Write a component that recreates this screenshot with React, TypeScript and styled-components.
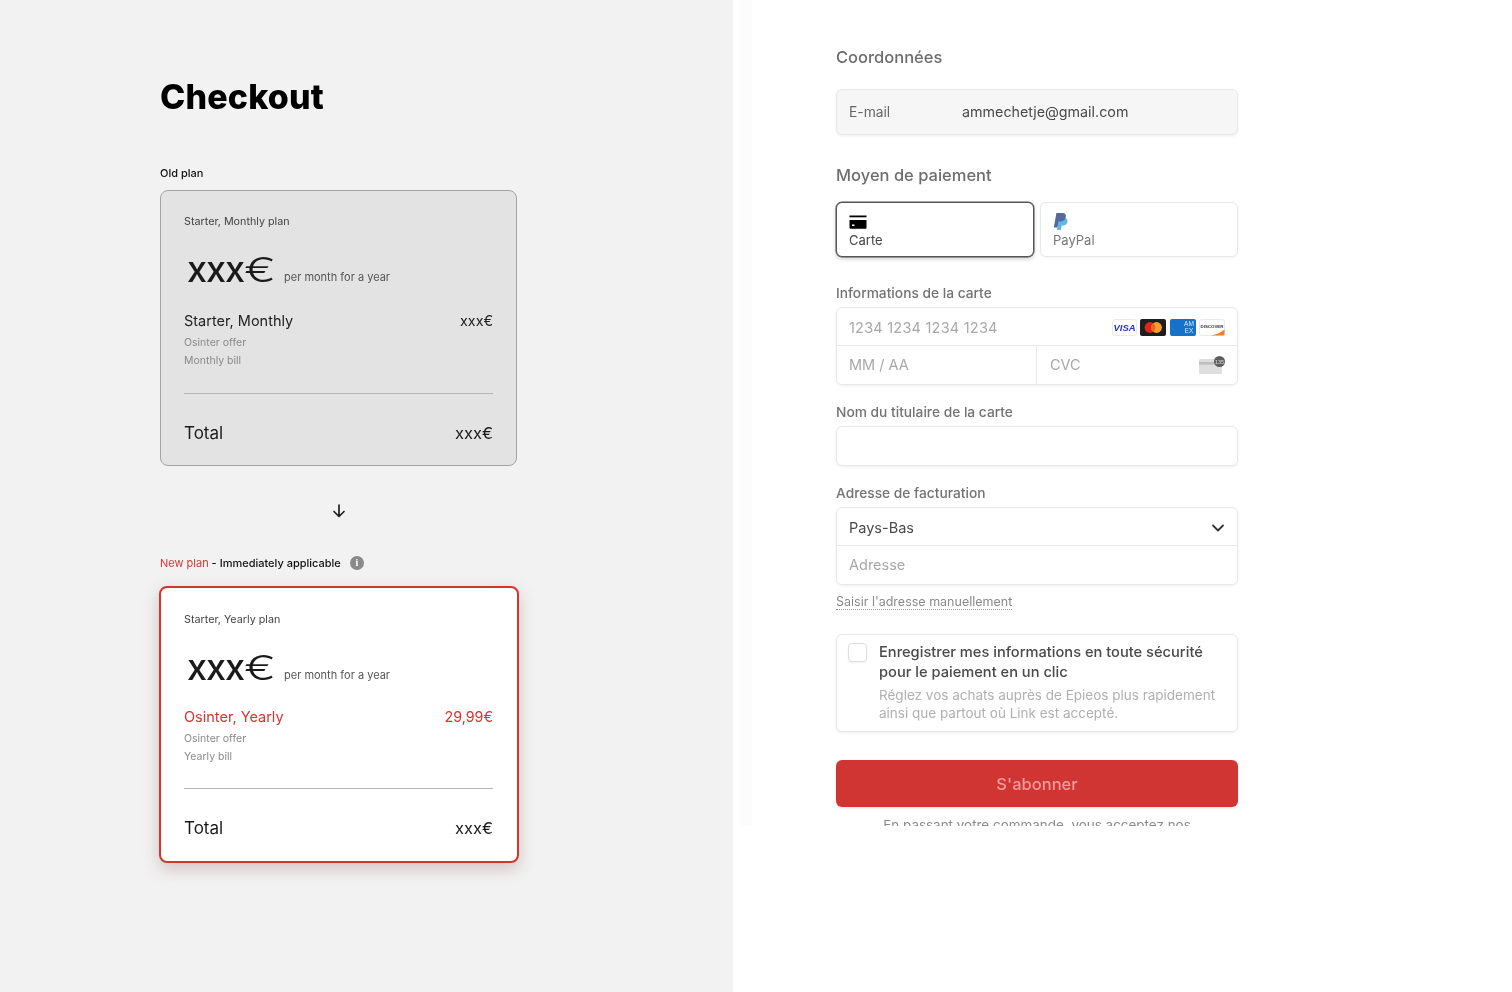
import React from "react";
import styled, { createGlobalStyle } from "styled-components";

const Global = createGlobalStyle`
  html, body { margin: 0; padding: 0; background: #fff; }
  * { box-sizing: border-box; }
  body { font-family: "Inter", "Liberation Sans", sans-serif; }
`;

const Page = styled.main`
  display: flex;
  width: 1512px;
  height: 992px;
  overflow: hidden;
  background: #fff;
`;

const LeftPanel = styled.section`
  width: 733px;
  height: 992px;
  flex: none;
  background: #f2f2f2;
  color: #111;
`;

const LeftColumn = styled.div`
  padding: 77px 0 0 160px;
  filter: blur(0.3px);
`;

const Title = styled.h1`
  margin: 0 0 48px;
  font-size: 34px;
  line-height: 40px;
  font-weight: 800;
  letter-spacing: 0.15px;
  color: #000;
`;

const PlanLabel = styled.div`
  display: flex;
  align-items: center;
  height: 16px;
  font-size: 11px;
  font-weight: 500;
  color: #111;
`;

const Accent = styled.span`
  color: #d43a35;
  font-weight: 400;
  white-space: pre;
`;

const InfoDot = styled.span`
  display: inline-flex;
  align-items: center;
  justify-content: center;
  width: 14px;
  height: 14px;
  margin-left: 9px;
  border-radius: 50%;
  background: #8a8a8a;
  color: #fff;
  font: 700 10px/14px "Liberation Serif", serif;
`;

const Card = styled.article<{ $active?: boolean }>`
  display: flex;
  flex-direction: column;
  margin-top: ${(p) => (p.$active ? 15 : 9)}px;
  margin-left: ${(p) => (p.$active ? -1 : 0)}px;
  width: ${(p) => (p.$active ? 360 : 357)}px;
  height: ${(p) => (p.$active ? 277 : 276)}px;
  padding: ${(p) => (p.$active ? "25px 24px 0 23px" : "24px 23px 0 23px")};
  border: ${(p) => (p.$active ? "2px solid #d5352f" : "1px solid #a4a4a4")};
  border-radius: 8px;
  background: ${(p) => (p.$active ? "#fff" : "#e3e3e3")};
  box-shadow: ${(p) => (p.$active ? "0 6px 16px rgba(120, 60, 55, 0.25)" : "none")};
`;

const PlanName = styled.div`
  height: 14px;
  font-size: 10.75px;
  line-height: 14px;
  color: #444;
`;

const PriceRow = styled.div`
  display: flex;
  align-items: flex-end;
  height: 44px;
  margin-top: 19px;
  padding-left: 3px;
`;

const BigPrice = styled.span`
  width: 97px;
  font-size: 36px;
  line-height: 44px;
  font-weight: 500;
  letter-spacing: -1px;
  color: #1a1a1a;
`;

const Euro = styled.span`
  display: inline-block;
  font-size: 34px;
  font-weight: 300;
  letter-spacing: 0;
  transform: scaleX(1.4);
  transform-origin: left center;
`;

const PerMonth = styled.span`
  margin-bottom: 8px;
  font-size: 11px;
  line-height: 14px;
  color: #555;
`;

const LineRow = styled.div<{ $active?: boolean }>`
  display: flex;
  justify-content: space-between;
  align-items: center;
  height: 20px;
  margin-top: ${(p) => (p.$active ? 17 : 19)}px;
  font-size: 14.5px;
  line-height: 20px;
  color: ${(p) => (p.$active ? "#d5352f" : "#222")};
`;

const Amount = styled.span`
  font-size: 14.3px;
`;

const Note = styled.div<{ $first?: boolean }>`
  height: 14px;
  margin-top: ${(p) => (p.$first ? 5 : 4)}px;
  font-size: 10.5px;
  line-height: 14px;
  color: #8a8a8a;
`;

const Rule = styled.hr<{ $active?: boolean }>`
  width: 100%;
  height: 1px;
  margin: ${(p) => (p.$active ? "24px" : "25px")} 0 0;
  border: 0;
  background: #b6b6b6;
`;

const TotalRow = styled.div`
  display: flex;
  justify-content: space-between;
  align-items: center;
  height: 24px;
  margin-top: 27px;
  font-size: 16.5px;
  line-height: 24px;
  color: #1a1a1a;
`;

const TotalLabel = styled.span`
  font-size: 17px;
`;

const ArrowSlot = styled.div`
  display: flex;
  justify-content: center;
  width: 357px;
  height: 16px;
  margin: 36px 0 37px;
  color: #222;
`;

const Stripe = styled.div`
  width: 19px;
  height: 826px;
  flex: none;
  background: linear-gradient(90deg, #fff 0, #fff 20%, #fcfcfc 50%, #fbfbfb 100%);
`;

const Form = styled.section`
  width: 410px;
  height: 826px;
  margin-left: 80px;
  flex: none;
  overflow: hidden;
  padding: 47px 4px 0;
  filter: blur(0.4px);
`;

const SectionTitle = styled.h2<{ $gap?: number }>`
  margin: ${(p) => p.$gap ?? 0}px 0 0;
  height: 20px;
  font-size: 16.5px;
  line-height: 20px;
  font-weight: 500;
  color: #6d6d6d;
`;

const Surface = styled.div`
  border: 1px solid #e8e8e8;
  border-radius: 6px;
  background: #fff;
  box-shadow: 0 1px 3px rgba(0, 0, 0, 0.07);
`;

const EmailBox = styled(Surface)`
  display: flex;
  align-items: center;
  height: 46px;
  margin-top: 22px;
  padding-left: 12px;
  background: #f6f6f6;
`;

const EmailLabel = styled.span`
  width: 113px;
  font-size: 13.8px;
  color: #666;
`;

const EmailValue = styled.span`
  margin-bottom: 2px;
  font-size: 14.3px;
  color: #4a4a4a;
`;

const Tabs = styled.div`
  display: grid;
  grid-template-columns: 198px 198px;
  gap: 6px;
  margin-top: 17px;
`;

const Tab = styled(Surface)<{ $selected?: boolean }>`
  display: flex;
  flex-direction: column;
  height: 55px;
  padding: 9px 12px 0;
  font-size: 13px;
  line-height: 16px;
  color: ${(p) => (p.$selected ? "#444" : "#777")};
  border-color: ${(p) => (p.$selected ? "#555" : "#e8e8e8")};
  box-shadow: ${(p) =>
    p.$selected
      ? "0 0 0 0.5px #555, 0 2px 4px rgba(0,0,0,0.2)"
      : "0 1px 3px rgba(0,0,0,0.05)"};
`;

const TabIcon = styled.div`
  display: flex;
  align-items: center;
  height: 20px;
`;

const FieldLabel = styled.div<{ $gap: number }>`
  height: 16px;
  margin-top: ${(p) => p.$gap}px;
  font-size: 13.75px;
  line-height: 16px;
  font-weight: 500;
  color: #737373;
`;

const FieldGroup = styled(Surface)`
  margin-top: 6px;
  overflow: hidden;
`;

const FieldRow = styled.div<{ $h: number; $split?: boolean }>`
  display: flex;
  align-items: center;
  height: ${(p) => p.$h}px;
  border-top: ${(p) => (p.$split ? "1px solid #e8e8e8" : "0")};
`;

const Cell = styled.div<{ $divider?: boolean; $w?: number; $strong?: boolean; $down?: number; $up?: number; $left?: number }>`
  display: flex;
  align-items: center;
  justify-content: space-between;
  flex: ${(p) => (p.$w ? "none" : "1")};
  width: ${(p) => (p.$w ? `${p.$w}px` : "auto")};
  height: 100%;
  padding: ${(p) => p.$down ?? 0}px 12px ${(p) => p.$up ?? 0}px ${(p) => p.$left ?? 12}px;
  border-right: ${(p) => (p.$divider ? "1px solid #e8e8e8" : "0")};
  font-size: 14.5px;
  color: ${(p) => (p.$strong ? "#4a4a4a" : "#a8a8a8")};
`;

const CardNumber = styled.span`
  letter-spacing: 0.22px;
`;

const Brands = styled.div`
  display: flex;
  gap: 3.5px;
`;

const ManualLink = styled.a`
  display: block;
  width: fit-content;
  margin-top: 9px;
  font-size: 12.5px;
  line-height: 15px;
  color: #8a8a8a;
  border-bottom: 1px dotted #9a9a9a;
`;

const SaveBox = styled(Surface)`
  display: flex;
  gap: 12.5px;
  height: 98px;
  margin-top: 24px;
  padding: 8px 11px;
`;

const Check = styled.span`
  flex: none;
  width: 18.5px;
  height: 18.5px;
  border-radius: 4px;
  background: #fff;
  border: 1px solid #dedede;
  box-shadow: 0 1px 2px rgba(0, 0, 0, 0.06);
`;

const SaveText = styled.div`
  min-width: 0;
  margin-top: -1px;
`;

const SaveTitle = styled.div`
  font-size: 14.65px;
  line-height: 20px;
  font-weight: 500;
  color: #4a4a4a;
`;

const SaveHint = styled.div`
  margin-top: 4px;
  font-size: 13.5px;
  line-height: 18px;
  color: #b0b0b0;
`;

const Subscribe = styled.button`
  display: block;
  width: 402px;
  height: 47px;
  margin-top: 28px;
  border: 0;
  border-radius: 6px;
  background: #d03533;
  color: #ef9d9b;
  font: 500 16.5px "Inter", sans-serif;
  box-shadow: 0 1px 3px rgba(0, 0, 0, 0.12);
`;

const Terms = styled.p`
  margin: 10px 0 0;
  text-align: center;
  font-size: 13.45px;
  line-height: 16px;
  color: #8a8a8a;
`;

const Chevron = styled.svg`
  flex: none;
  color: #333;
`;

const ArrowDown = () => (
  <svg width="14" height="16" viewBox="0 0 14 16" fill="none" stroke="#222" strokeWidth="1.7" strokeLinecap="round" strokeLinejoin="round">
    <path d="M7 3v11M2 9.5 7 14.5 12 9.5" />
  </svg>
);

const CardGlyph = () => (
  <svg width="18" height="14" viewBox="0 0 18 14">
    <rect x="0.5" y="0.5" width="17" height="1.8" fill="#000" />
    <path d="M.5 5h17v8a.8.8 0 0 1-.8.8H1.3a.8.8 0 0 1-.8-.8z" fill="#000" />
    <rect x="3" y="9.5" width="2.5" height="1.5" fill="#fff" />
  </svg>
);

const PaypalGlyph = () => (
  <svg width="16" height="18" viewBox="0 0 16 18">
    <path d="M6 5h6.5c1.8 1 2.3 2.3 2 4-.5 2.4-2.3 3.5-4.5 3.5H8.6L7.8 17H4z" fill="#5cb8e6" />
    <path d="M3.4 0h6c2.5 0 4 1.4 3.4 4-.6 3-2.6 4.4-5.2 4.4H5.6L4.5 14.6H.8z" fill="#55699f" />
  </svg>
);

const Visa = () => (
  <svg width="25" height="17" viewBox="0 0 25 17">
    <rect x="0.5" y="0.5" width="24" height="16" rx="2" fill="#fff" stroke="#eaeaea" />
    <text x="12.5" y="11.8" textAnchor="middle" fontFamily="Liberation Sans, sans-serif" fontSize="9.5" fontWeight="700" fontStyle="italic" fill="#2438b0">VISA</text>
  </svg>
);

const Mastercard = () => (
  <svg width="26" height="17" viewBox="0 0 26 17">
    <rect width="26" height="17" rx="2" fill="#1e1e1e" />
    <circle cx="10" cy="8.5" r="5.4" fill="#e0261c" />
    <circle cx="16.5" cy="8.5" r="5.4" fill="#f59e2d" />
    <path d="M13.25 4.2a5.4 5.4 0 0 1 0 8.6 5.4 5.4 0 0 1 0-8.6z" fill="#f0641e" />
  </svg>
);

const Amex = () => (
  <svg width="26" height="17" viewBox="0 0 26 17">
    <rect width="26" height="17" rx="2" fill="#1672c8" />
    <text x="19" y="7.4" textAnchor="middle" fontFamily="Liberation Sans, sans-serif" fontSize="6.6" fontWeight="400" fill="#d4e7f8">AM</text>
    <text x="19" y="14" textAnchor="middle" fontFamily="Liberation Sans, sans-serif" fontSize="6.6" fontWeight="400" fill="#d4e7f8">EX</text>
  </svg>
);

const Discover = () => (
  <svg width="26" height="17" viewBox="0 0 26 17">
    <rect x="0.5" y="0.5" width="25" height="16" rx="2" fill="#fff" stroke="#eaeaea" />
    <path d="M12 16.5c6-1 10-3 13.5-6v5a1 1 0 0 1-1 1z" fill="#ee7f2d" />
    <text x="13" y="9.4" textAnchor="middle" fontFamily="Liberation Sans, sans-serif" fontSize="4.4" fontWeight="700" fill="#333">DISCOVER</text>
  </svg>
);

const Cvc = () => (
  <svg width="26" height="18" viewBox="0 0 26 18">
    <rect x="0" y="3" width="23" height="15" rx="1.5" fill="#dedede" />
    <rect x="0" y="6" width="23" height="2.6" fill="#bdbdbd" />
    <circle cx="20.5" cy="5.5" r="5.5" fill="#5e5e5e" />
    <text x="20.5" y="7.5" textAnchor="middle" fontFamily="Liberation Sans, sans-serif" fontSize="5.5" fill="#ddd">135</text>
  </svg>
);

type PlanProps = {
  active?: boolean;
  plan: string;
  line: string;
  amount: string;
  bill: string;
};

const PlanCard = ({ active, plan, line, amount, bill }: PlanProps) => (
  <Card $active={active}>
    <PlanName>{plan}</PlanName>
    <PriceRow>
      <BigPrice>
        xxx<Euro>€</Euro>
      </BigPrice>
      <PerMonth>per month for a year</PerMonth>
    </PriceRow>
    <LineRow $active={active}>
      <span>{line}</span>
      <Amount>{amount}</Amount>
    </LineRow>
    <Note $first>Osinter offer</Note>
    <Note>{bill}</Note>
    <Rule $active={active} />
    <TotalRow>
      <TotalLabel>Total</TotalLabel>
      <span>xxx€</span>
    </TotalRow>
  </Card>
);

export default function App() {
  return (
    <Page>
      <Global />
      <LeftPanel>
        <LeftColumn>
          <Title>Checkout</Title>
          <PlanLabel>Old plan</PlanLabel>
          <PlanCard plan="Starter, Monthly plan" line="Starter, Monthly" amount="xxx€" bill="Monthly bill" />
          <ArrowSlot>
            <ArrowDown />
          </ArrowSlot>
          <PlanLabel>
            <Accent>New plan</Accent>&nbsp;- Immediately applicable
            <InfoDot>i</InfoDot>
          </PlanLabel>
          <PlanCard active plan="Starter, Yearly plan" line="Osinter, Yearly" amount="29,99€" bill="Yearly bill" />
        </LeftColumn>
      </LeftPanel>
      <Stripe />
      <Form>
        <SectionTitle>Coordonnées</SectionTitle>
        <EmailBox>
          <EmailLabel>E-mail</EmailLabel>
          <EmailValue>ammechetje@gmail.com</EmailValue>
        </EmailBox>
        <SectionTitle $gap={30}>Moyen de paiement</SectionTitle>
        <Tabs>
          <Tab $selected>
            <TabIcon>
              <CardGlyph />
            </TabIcon>
            Carte
          </Tab>
          <Tab>
            <TabIcon>
              <PaypalGlyph />
            </TabIcon>
            PayPal
          </Tab>
        </Tabs>
        <FieldLabel $gap={28}>Informations de la carte</FieldLabel>
        <FieldGroup>
          <FieldRow $h={37}>
            <Cell $down={1}>
              <CardNumber>1234 1234 1234 1234</CardNumber>
              <Brands>
                <Visa />
                <Mastercard />
                <Amex />
                <Discover />
              </Brands>
            </Cell>
          </FieldRow>
          <FieldRow $h={39} $split>
            <Cell $w={200} $divider $up={1}>MM / AA</Cell>
            <Cell $up={1} $left={13}>
              CVC
              <Cvc />
            </Cell>
          </FieldRow>
        </FieldGroup>
        <FieldLabel $gap={19}>Nom du titulaire de la carte</FieldLabel>
        <FieldGroup>
          <FieldRow $h={38} />
        </FieldGroup>
        <FieldLabel $gap={19}>Adresse de facturation</FieldLabel>
        <FieldGroup>
          <FieldRow $h={37}>
            <Cell $strong $down={2}>
              Pays-Bas
              <Chevron width="14" height="14" viewBox="0 0 14 14" fill="none" stroke="currentColor" strokeWidth="1.8" strokeLinecap="round" strokeLinejoin="round">
                <path d="M2 4.5 7 9.5 12 4.5" />
              </Chevron>
            </Cell>
          </FieldRow>
          <FieldRow $h={39} $split>
            <Cell $up={1}>Adresse</Cell>
          </FieldRow>
        </FieldGroup>
        <ManualLink>Saisir l'adresse manuellement</ManualLink>
        <SaveBox>
          <Check />
          <SaveText>
            <SaveTitle>
              Enregistrer mes informations en toute sécurité
              <br />
              pour le paiement en un clic
            </SaveTitle>
            <SaveHint>
              Réglez vos achats auprès de Epieos plus rapidement
              <br />
              ainsi que partout où Link est accepté.
            </SaveHint>
          </SaveText>
        </SaveBox>
        <Subscribe>S'abonner</Subscribe>
        <Terms>En passant votre commande, vous acceptez nos</Terms>
      </Form>
    </Page>
  );
}
